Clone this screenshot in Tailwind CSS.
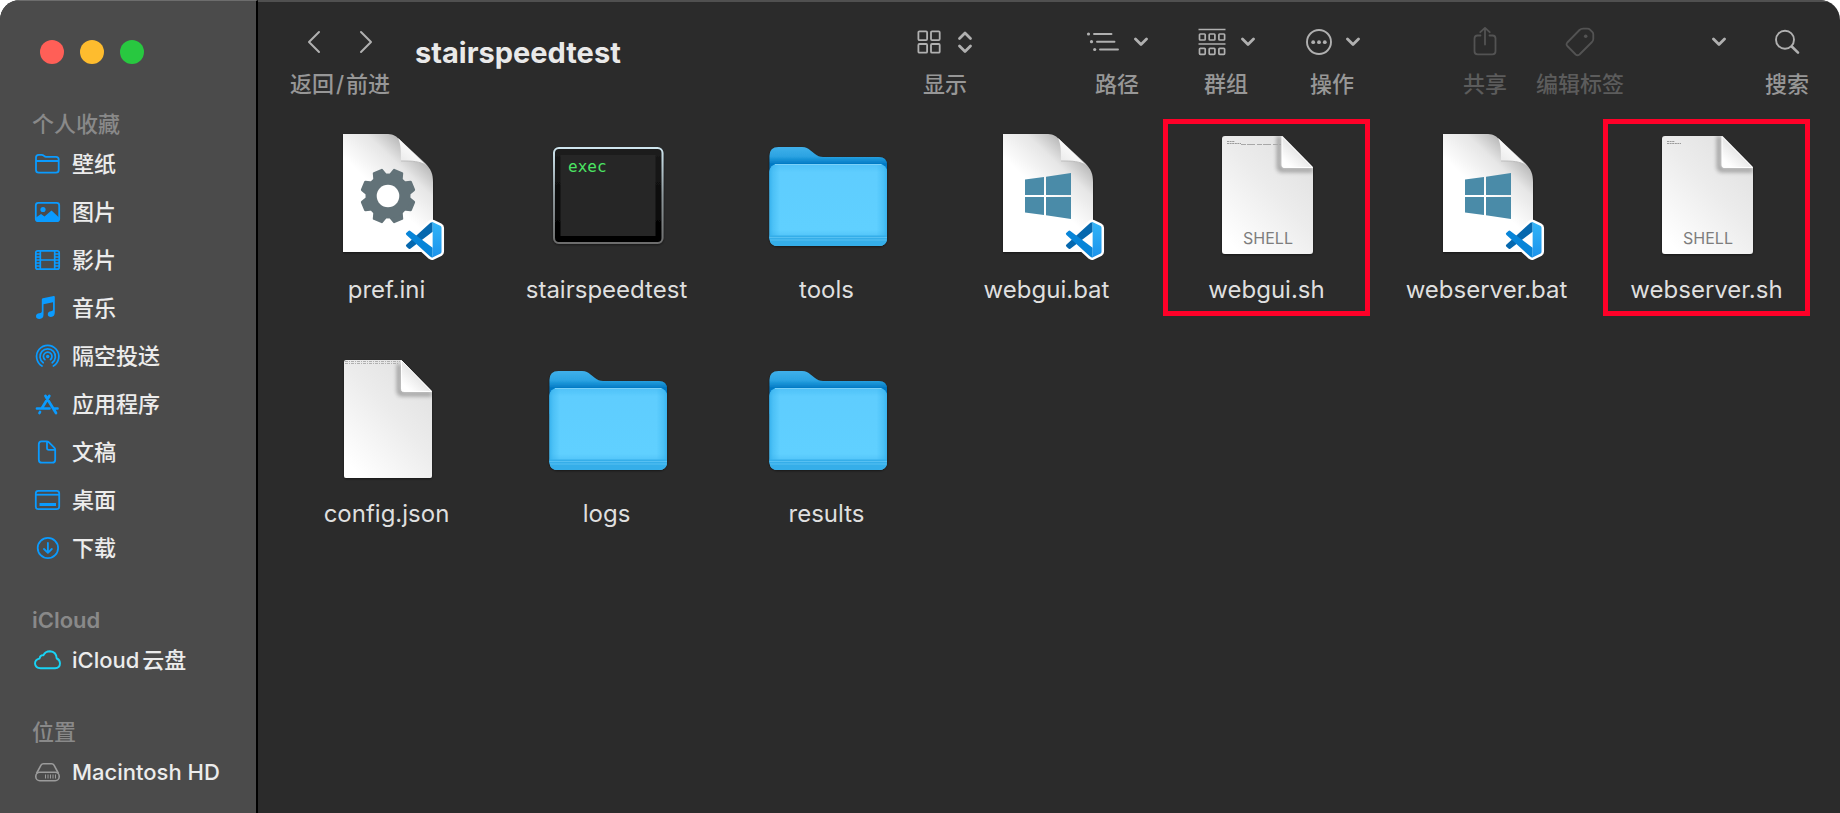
<!DOCTYPE html>
<html lang="zh-CN">
<head>
<meta charset="utf-8">
<title>stairspeedtest</title>
<script src="https://cdn.jsdelivr.net/npm/@tailwindcss/browser@4"></script>
</head>
<body class="bg-white font-['Inter','Noto_Sans_CJK_SC',sans-serif]">

<!-- Shared drawings -->
<svg class="absolute size-0" aria-hidden="true">
  <defs>
    <linearGradient id="paper" x1="1" y1="0" x2="0.2" y2="1"><stop offset="0" stop-color="#dedede"/><stop offset="0.5" stop-color="#ececec"/><stop offset="1" stop-color="#ffffff"/></linearGradient>
    <linearGradient id="flap" x1="0.9" y1="0.1" x2="0.2" y2="0.9"><stop offset="0.4" stop-color="#e2e2e2"/><stop offset="1" stop-color="#ffffff"/></linearGradient>
    <linearGradient id="curl" x1="0.75" y1="0.1" x2="0.45" y2="0.52"><stop offset="0" stop-color="#b4b4b4"/><stop offset="0.4" stop-color="#e6e6e6"/><stop offset="1" stop-color="#ffffff"/></linearGradient>
    <linearGradient id="curlflap" x1="0.7" y1="0.2" x2="0.1" y2="0.9"><stop offset="0.1" stop-color="#ffffff"/><stop offset="1" stop-color="#e9e9e9"/></linearGradient>
    <linearGradient id="folderback" x1="0" y1="17" x2="0" y2="34" gradientUnits="userSpaceOnUse"><stop offset="0" stop-color="#40b0ea"/><stop offset="0.55" stop-color="#2ba3e2"/><stop offset="1" stop-color="#0079c4"/></linearGradient>
    <linearGradient id="folderside" x1="0" y1="0" x2="1" y2="0"><stop offset="0" stop-color="#2fadeb" stop-opacity="0.8"/><stop offset="0.03" stop-color="#2fadeb" stop-opacity="0.4"/><stop offset="0.09" stop-color="#2fadeb" stop-opacity="0"/><stop offset="0.91" stop-color="#2fadeb" stop-opacity="0"/><stop offset="0.97" stop-color="#2fadeb" stop-opacity="0.4"/><stop offset="1" stop-color="#2fadeb" stop-opacity="0.8"/></linearGradient>
    <linearGradient id="folderface" x1="0" y1="0" x2="0" y2="1"><stop offset="0" stop-color="#4fc1f7"/><stop offset="0.1" stop-color="#5ecdfe"/><stop offset="0.8" stop-color="#60d0ff"/><stop offset="0.87" stop-color="#55c6fa"/></linearGradient>
    <linearGradient id="termedge" x1="0" y1="0" x2="0" y2="1"><stop offset="0" stop-color="#cfe6ef"/><stop offset="0.5" stop-color="#8d979b"/><stop offset="1" stop-color="#6d6d6d"/></linearGradient>
    <linearGradient id="termbody" x1="0" y1="0" x2="0" y2="1"><stop offset="0" stop-color="#1c1c1c"/><stop offset="1" stop-color="#000000"/></linearGradient>
    <linearGradient id="codepanel" x1="0" y1="0" x2="0" y2="1"><stop offset="0" stop-color="#32b5f8"/><stop offset="1" stop-color="#1c93ec"/></linearGradient>
    <filter id="blur" x="-30%" y="-30%" width="160%" height="160%"><feGaussianBlur stdDeviation="2"/></filter>
    <filter id="drop" x="-10%" y="-10%" width="120%" height="125%"><feDropShadow dx="0" dy="1" stdDeviation="1" flood-color="#000" flood-opacity="0.5"/></filter>
    <clipPath id="paperclip"><path d="M23 6H80.500L111 37V121a3 3 0 0 1-3 3H23a3 3 0 0 1-3-3V9a3 3 0 0 1 3-3z"/></clipPath>
  </defs>

  <symbol id="code-page" viewBox="0 0 129 132">
    <g filter="url(#drop)">
      <path d="M21 4H64C70 4 73 5 77 9L103 33C109 39 111 44 111 52V122H21z" fill="url(#curl)"/>
    </g>
    <path d="M76 8C79 14 79 22 79 31C90 31 98 31 105 36z" fill="url(#curlflap)"/>
    <path d="M79 31C90 31 98 31 105 36" fill="none" stroke="#bdbdbd" stroke-width="1"/>
  </symbol>

  <symbol id="code-badge" viewBox="0 0 129 132">
    <g transform="translate(84 92) scale(1.480)">
      <path d="M18.200.2L23.150 2.587A1.500 1.500 0 0 1 24 3.939V20.060A1.500 1.500 0 0 1 23.150 21.400L18.200 23.790A1.500 1.500 0 0 1 16.500 23.500L7 14.900 2.900 18 1.600 17.900.3 16.700V15.300L3.900 12 .3 8.700V7.300L1.600 6.100 2.900 6 7 9.100 16.500.5A1.500 1.500 0 0 1 18.200.2z" fill="#fff" stroke="#fff" stroke-width="3.400" stroke-linejoin="round"/>
      <path d="M18 .1L16.500.5.326 15.260a1 1 0 0 0 .001 1.479L1.650 17.940a.999.999 0 0 0 1.276.057L18 6.550z" fill="#0668ae"/>
      <path d="M18 23.900L16.500 23.500.326 8.740a1 1 0 0 1 .001-1.479L1.650 6.060a.999.999 0 0 1 1.276-.057L18 17.450z" fill="#0885d8"/>
      <path d="M16.500.5A1.490 1.490 0 0 1 18.210.21L23.150 2.587A1.500 1.500 0 0 1 24 3.939V20.060a1.500 1.500 0 0 1-.85 1.352L18.210 23.790A1.490 1.490 0 0 1 16.500 23.500C17.200 24 18 23.500 18 22.700V1.300C18 .5 17.200 0 16.500.5z" fill="url(#codepanel)"/>
    </g>
  </symbol>

  <symbol id="file-ini" viewBox="0 0 129 132">
    <use href="#code-page"/>
    <g transform="translate(66 66)" fill="#627278">
      <path id="tooth" d="M-7.500-20L-5.500-26.500Q-5.200-27.500-4.200-27.500H4.200Q5.200-27.500 5.500-26.500L7.500-20z" transform="rotate(22.500)"/>
      <use href="#tooth" transform="rotate(45)"/><use href="#tooth" transform="rotate(90)"/><use href="#tooth" transform="rotate(135)"/><use href="#tooth" transform="rotate(180)"/><use href="#tooth" transform="rotate(225)"/><use href="#tooth" transform="rotate(270)"/><use href="#tooth" transform="rotate(315)"/>
      <circle r="22.500"/><circle r="11.300" fill="#fff"/>
    </g>
    <use href="#code-badge"/>
  </symbol>

  <symbol id="file-bat" viewBox="0 0 129 132">
    <use href="#code-page"/>
    <path d="M43 49.500L62 47V65H43zM64 46.700L89 43V65H64zM43 67H62V85L43 82.500zM64 67H89V89L64 85.300z" fill="#4a8ba8"/>
    <use href="#code-badge"/>
  </symbol>

  <symbol id="file-sh" viewBox="0 0 129 132">
    <g filter="url(#drop)"><path d="M23 6H80.500L111 37V121a3 3 0 0 1-3 3H23a3 3 0 0 1-3-3V9a3 3 0 0 1 3-3z" fill="url(#paper)"/></g>
    <g clip-path="url(#paperclip)"><path d="M79 6V38H111V42H80Q75 42 75 37V6z" fill="#000" opacity="0.350" filter="url(#blur)"/></g>
    <path d="M80 6.500V35.500Q80 37.500 82 37.500H110.500z" fill="url(#flap)" stroke="#fff" stroke-width="1"/>
    <path d="M25 11.500H33M25 13.500H39" stroke="#9a9a9a" stroke-width="1" stroke-dasharray="2 .6" fill="none"/>
  </symbol>

  <symbol id="file-json" viewBox="0 0 129 132">
    <g filter="url(#drop)"><path d="M24 6H79L110 37V122a2 2 0 0 1-2 2H24a2 2 0 0 1-2-2V8a2 2 0 0 1 2-2z" fill="url(#paper)"/></g>
    <g clip-path="url(#paperclip)"><path d="M79 10V38H110V42H80Q75 42 75 37V10z" fill="#000" opacity="0.350" filter="url(#blur)"/></g>
    <path d="M79.500 6.500V35.500Q79.500 37.500 81.500 37.500H109.500z" fill="url(#flap)" stroke="#fff" stroke-width="1"/>
    <path d="M23 7.500H78M23 9.500H76" stroke="#b0b0b0" stroke-width="1" stroke-dasharray="3 1 1 1"/>
  </symbol>

  <symbol id="folder" viewBox="0 0 129 132">
    <g filter="url(#drop)">
      <path d="M7.500 26Q7.500 17 16.500 17H40C44 17 46 18.500 48.500 20.500L53 24C55.500 26 57.500 27 61 27H117Q125 27 125 35V60H7.500z" fill="url(#folderback)"/>
      <rect x="7.500" y="34" width="117.500" height="82" rx="8" fill="url(#folderface)"/>
    </g>
    <rect x="7.500" y="34" width="117.500" height="82" rx="8" fill="url(#folderside)"/>
    <path d="M7.500 105.500H125V108Q125 116 117 116H15.500Q7.500 116 7.500 108z" fill="#35aee9"/>
    <path d="M7.500 107.500H125M8 110H124.500" stroke="#56c0f2" stroke-width="1"/>
    <path d="M13 34.500H119.500" stroke="#7bd0f8" stroke-width="1"/>
  </symbol>

  <symbol id="terminal" viewBox="0 0 129 132">
    <rect x="12" y="18" width="108.500" height="95" rx="5" fill="url(#termbody)" stroke="url(#termedge)" stroke-width="2" filter="url(#drop)"/>
    <rect x="18.500" y="25" width="95" height="81" fill="#262626"/>
  </symbol>

  <symbol id="chevron" viewBox="0 0 14 10"><path d="M1.500 2L7 7.500 12.500 2" fill="none" stroke="currentColor" stroke-width="2.800" stroke-linecap="round" stroke-linejoin="round"/></symbol>
</svg>

<div class="flex min-h-screen rounded-t-[20px] overflow-hidden bg-[#2b2b2b] text-[22px]">

  <aside class="w-[258px] shrink-0 bg-[#4b4b4b] border-r-2 border-black border-t border-t-[#6d6d6d] pt-[39px] text-[#ececec]">
    <div class="flex gap-4 pl-10">
      <button aria-label="关闭" class="size-6 rounded-full bg-[#ff5f57]"></button>
      <button aria-label="最小化" class="size-6 rounded-full bg-[#febc2e]"></button>
      <button aria-label="缩放" class="size-6 rounded-full bg-[#28c840]"></button>
    </div>
    <nav class="mt-11 flex flex-col gap-8 font-medium text-[#0a9bff]">
      <section>
        <h2 class="h-8 leading-8 pl-8 text-[#898989]">个人收藏</h2>
        <ul>
          <li><a href="#" class="flex h-12 items-center gap-2 pl-8"><svg class="size-8" viewBox="0 0 32 32" fill="none" stroke="currentColor" stroke-width="1.800"><path d="M4 9.500Q4 6.800 6.700 6.800H9.500Q11 6.800 12 7.800Q13 8.800 14.500 8.800H24Q26.700 8.800 26.700 11.500V22Q26.700 24.700 24 24.700H6.700Q4 24.700 4 22zM4 13H26.700"/></svg><span class="text-[#ececec]">壁纸</span></a></li>
          <li><a href="#" class="flex h-12 items-center gap-2 pl-8"><svg class="size-8" viewBox="0 0 32 32"><rect x="3.800" y="6.800" width="23.400" height="18.400" rx="2.500" fill="none" stroke="currentColor" stroke-width="1.800"/><circle cx="11" cy="13.500" r="2.600" fill="currentColor"/><path d="M4 21.500L9 18 12.500 20.500 19.500 14.500 27 21.500V25H4z" fill="currentColor"/></svg><span class="text-[#ececec]">图片</span></a></li>
          <li><a href="#" class="flex h-12 items-center gap-2 pl-8"><svg class="size-8" viewBox="0 0 32 32" fill="none" stroke="currentColor" stroke-width="1.700"><rect x="3.800" y="6.800" width="23.400" height="18.400" rx="2"/><path d="M8.300 7V25M22.700 7V25M8.300 16H22.700M4 10H8M4 13H8M4 16H8M4 19H8M4 22H8M23 10H27M23 13H27M23 16H27M23 19H27M23 22H27"/></svg><span class="text-[#ececec]">影片</span></a></li>
          <li><a href="#" class="flex h-12 items-center gap-2 pl-8"><svg class="size-8" viewBox="0 0 32 32" fill="currentColor"><path d="M9.800 7.500Q9.800 6.500 10.800 6.300L21.800 4.100Q22.800 4 22.800 5V20.500Q22.800 24.500 19 25Q15.800 25 15.800 22.300Q15.800 19.600 19 19.300Q21 19.200 21 17.800V10.300L11.500 12.300V22.800Q11.500 26.500 7.500 27Q4 27 4 24.300Q4 21.700 7.300 21.300Q9.800 21.200 9.800 19.500z"/></svg><span class="text-[#ececec]">音乐</span></a></li>
          <li><a href="#" class="flex h-12 items-center gap-2 pl-8"><svg class="size-8" viewBox="0 0 32 32" fill="none" stroke="currentColor" stroke-width="1.700" stroke-linecap="round"><circle cx="15.700" cy="16.500" r="1.700" fill="currentColor" stroke="none"/><path d="M12.900 19.700A4.300 4.300 0 1 1 18.500 19.700M11.200 22.800A7.700 7.700 0 1 1 20.200 22.800M10 26A11.100 11.100 0 1 1 21.400 26"/></svg><span class="text-[#ececec]">隔空投送</span></a></li>
          <li><a href="#" class="flex h-12 items-center gap-2 pl-8"><svg class="size-8" viewBox="0 0 32 32" fill="none" stroke="currentColor" stroke-width="2.700" stroke-linecap="round"><path d="M5 20.500H17.500M22.500 20.500H25.500M17.300 8L10 20M13.500 8L24 25M8 24L7.500 25"/></svg><span class="text-[#ececec]">应用程序</span></a></li>
          <li><a href="#" class="flex h-12 items-center gap-2 pl-8"><svg class="size-8" viewBox="0 0 32 32" fill="none" stroke="currentColor" stroke-width="1.800" stroke-linejoin="round"><path d="M9.500 5.300H14.500Q16 5.300 17 6.300L22.200 11.700Q23.200 12.700 23.200 14V23.700Q23.200 26.700 20.200 26.700H9.800Q6.800 26.700 6.800 23.700V8.300Q6.800 5.300 9.500 5.300zM15 5.500V12Q15 13.800 16.800 13.800H23"/></svg><span class="text-[#ececec]">文稿</span></a></li>
          <li><a href="#" class="flex h-12 items-center gap-2 pl-8"><svg class="size-8" viewBox="0 0 32 32" fill="none" stroke="currentColor" stroke-width="1.800"><rect x="3.800" y="6.800" width="23.400" height="18.400" rx="2.500"/><path d="M4 10.700H27"/><path d="M7.500 20.500H24" stroke-width="3"/></svg><span class="text-[#ececec]">桌面</span></a></li>
          <li><a href="#" class="flex h-12 items-center gap-2 pl-8"><svg class="size-8" viewBox="0 0 32 32" fill="none" stroke="currentColor" stroke-width="1.800" stroke-linecap="round" stroke-linejoin="round"><circle cx="15.900" cy="16" r="10.200"/><path d="M15.900 11V20.500M12 17L15.900 20.800 19.800 17"/></svg><span class="text-[#ececec]">下载</span></a></li>
        </ul>
      </section>
      <section>
        <h2 class="h-8 leading-8 pl-8 text-[#898989] font-semibold">iCloud</h2>
        <ul>
          <li><a href="#" class="flex h-12 items-center gap-2 pl-8"><svg class="size-8 text-[#19d3f5]" viewBox="0 0 32 32" fill="none" stroke="currentColor" stroke-width="1.900" stroke-linejoin="round"><path d="M8.500 24.200H23Q28 24 28 19.300Q27.800 15.500 24.700 14.500Q24.300 7.500 18 7.200Q13.200 7.200 11.500 11.200Q8.200 10.800 7.500 14.600Q3 15.500 3 19.700Q3.500 24.200 8.500 24.200z"/></svg><span class="text-[#ececec]">iCloud<span class="ml-[3px]">云盘</span></span></a></li>
        </ul>
      </section>
      <section>
        <h2 class="h-8 leading-8 pl-8 text-[#898989]">位置</h2>
        <ul>
          <li><a href="#" class="flex h-12 items-center gap-2 pl-8"><svg class="size-8 text-[#9b9b9b]" viewBox="0 0 32 32" fill="none" stroke="currentColor" stroke-width="1.600"><path d="M4.500 17.500L9 9.200Q9.800 7.800 11.300 7.800H19.700Q21.200 7.800 22 9.200L26.500 17.500"/><rect x="3.800" y="16.300" width="23.400" height="8.400" rx="4"/><path d="M13.500 18.500V22.500M16 18.500V22.500M18.500 18.500V22.500M21 18.500V22.500M23.500 18.500V22.500" stroke-width="1"/></svg><span class="text-[#ececec]">Macintosh HD</span></a></li>
        </ul>
      </section>
    </nav>
  </aside>

  <main class="min-w-0 flex-1 border-t-2 border-t-[#505050]">
    <header class="flex pt-[25px] pl-[31px] pr-[31px] h-[117px] leading-7 font-medium text-[#979797]">
      <div class="flex w-[102px] flex-col items-center gap-[13px]">
        <div class="flex h-[30px] items-center gap-9 text-[#b0b0b0]">
          <button aria-label="返回"><svg class="w-4 h-6" viewBox="0 0 16 24" fill="none" stroke="currentColor" stroke-width="2" stroke-linecap="round" stroke-linejoin="round"><path d="M13 2L3 12 13 22"/></svg></button>
          <button aria-label="前进"><svg class="w-4 h-6" viewBox="0 0 16 24" fill="none" stroke="currentColor" stroke-width="2" stroke-linecap="round" stroke-linejoin="round"><path d="M3 2L13 12 3 22"/></svg></button>
        </div>
        <span class="flex gap-[2px]"><span>返回</span><span>/</span><span>前进</span></span>
      </div>
      <h1 class="ml-6 mr-auto mt-2 leading-9 text-[29px] font-bold text-[#e9e9e9]">stairspeedtest</h1>

      <button class="flex w-[56px] flex-col items-center gap-[13px] mr-[113px]">
        <span class="flex h-[30px] items-center gap-4 text-[#b0b0b0]"><svg class="w-6 h-6" viewBox="0 0 24 24" fill="none" stroke="currentColor" stroke-width="1.800"><rect x="1.400" y="1.400" width="8.700" height="8.700" rx="1"/><rect x="14" y="1.400" width="8.700" height="8.700" rx="1"/><rect x="1.400" y="14" width="8.700" height="8.700" rx="1"/><rect x="14" y="14" width="8.700" height="8.700" rx="1"/></svg><svg class="w-4 h-6" viewBox="0 0 16 24" fill="none" stroke="currentColor" stroke-width="2.800" stroke-linecap="round" stroke-linejoin="round"><path d="M2.500 8.500L8 3 13.500 8.500M2.500 16L8 21.500 13.500 16"/></svg></span>
        <span>显示</span>
      </button>
      <button class="flex w-[62px] flex-col items-center gap-[13px] mr-[49px]">
        <span class="flex h-[30px] items-center gap-[14px] text-[#b0b0b0]"><svg class="w-[34px] h-6" viewBox="0 0 34 24" fill="none" stroke="currentColor" stroke-width="1.900" stroke-linecap="round"><path d="M8 4H25.500M11 11.700H28.500M14 19.500H32"/><g fill="currentColor" stroke="none"><circle cx="2.500" cy="4" r="1.600"/><circle cx="5.500" cy="11.700" r="1.600"/><circle cx="8.700" cy="19.500" r="1.600"/></g></svg><svg class="w-[14px] h-[10px]"><use href="#chevron"/></svg></span>
        <span>路径</span>
      </button>
      <button class="flex w-[58px] flex-col items-center gap-[13px] mr-[49px]">
        <span class="flex h-[30px] items-center gap-[15px] text-[#b0b0b0]"><svg class="w-7 h-7" viewBox="0 0 28 28" fill="none" stroke="currentColor" stroke-width="1.600"><path d="M.5 1.500H27.500M.5 16H27.500"/><g stroke-width="1.700"><rect x="1.500" y="6" width="5.700" height="6" rx=".8"/><rect x="11.200" y="6" width="5.700" height="6" rx=".8"/><rect x="20.900" y="6" width="5.700" height="6" rx=".8"/><rect x="1.500" y="20.300" width="5.700" height="6" rx=".8"/><rect x="11.200" y="20.300" width="5.700" height="6" rx=".8"/><rect x="20.900" y="20.300" width="5.700" height="6" rx=".8"/></g></svg><svg class="w-[14px] h-[10px]"><use href="#chevron"/></svg></span>
        <span>群组</span>
      </button>
      <button class="flex w-[56px] flex-col items-center gap-[13px] mr-[103px]">
        <span class="flex h-[30px] items-center gap-[13px] text-[#b0b0b0]"><svg class="w-7 h-7" viewBox="0 0 28 28" fill="none" stroke="currentColor" stroke-width="1.900"><circle cx="14" cy="14" r="12"/><g fill="currentColor" stroke="none"><circle cx="8.200" cy="14.200" r="1.900"/><circle cx="14" cy="14.200" r="1.900"/><circle cx="19.800" cy="14.200" r="1.900"/></g></svg><svg class="w-[14px] h-[10px]"><use href="#chevron"/></svg></span>
        <span>操作</span>
      </button>
      <button disabled class="flex w-11 flex-col items-center gap-[13px] mr-[29px] text-[#5c5c5c]">
        <span class="flex h-[30px] items-center"><svg class="w-6 h-[30px]" viewBox="0 0 24 30" fill="none" stroke="#535353" stroke-width="1.800" stroke-linecap="round" stroke-linejoin="round"><path d="M7.500 8.500H4.500Q1.500 8.500 1.500 11.500V24.300Q1.500 27.300 4.500 27.300H19.500Q22.500 27.300 22.500 24.300V11.500Q22.500 8.500 19.500 8.500H16.500M12 17.500V1M7.300 5.200L12 .9 16.700 5.200"/></svg></span>
        <span>共享</span>
      </button>
      <button disabled class="flex w-[88px] flex-col items-center gap-[13px] mr-[88px] text-[#5c5c5c]">
        <span class="flex h-[30px] items-center"><svg class="w-[30px] h-[30px]" viewBox="0 0 30 30" fill="none" stroke="#535353" stroke-width="1.800" stroke-linejoin="round"><path d="M14.500 3Q16 1.600 18 1.600H22.500Q24 1.600 25 2.600L27.500 5.200Q28.300 6 28.300 7.500V12Q28.300 13.500 27 15L14.500 27.500Q12.500 29 10.700 27.500L2.300 19Q.8 17.300 2.300 15.500z"/><circle cx="20.700" cy="9.200" r="1.800" fill="#535353" stroke="none"/></svg></span>
        <span>编辑标签</span>
      </button>
      <button aria-label="更多" class="flex h-[30px] items-center mr-[39px] text-[#b0b0b0]"><svg class="w-[14px] h-[10px]"><use href="#chevron"/></svg></button>
      <button class="flex w-11 flex-col items-center gap-[13px]">
        <span class="flex h-[30px] items-center text-[#b0b0b0]"><svg class="w-[26px] h-[26px]" viewBox="0 0 26 26" fill="none" stroke="currentColor" stroke-linecap="round"><circle cx="11" cy="10.700" r="9" stroke-width="1.900"/><path d="M17.800 17.500L24 23.700" stroke-width="2.600"/></svg></span>
        <span>搜索</span>
      </button>
    </header>

    <ul class="grid grid-cols-[repeat(auto-fill,207px)] gap-x-[13px] gap-y-[27px] pl-[25px] pr-6 text-[24px] leading-8 text-[#dfdfdf]">
      <li><button class="flex h-[197px] w-full flex-col items-center gap-3 border-5 border-transparent pt-[6px]"><svg class="w-[129px] h-[132px]"><use href="#file-ini"/></svg><span>pref.ini</span></button></li>
      <li><button class="flex h-[197px] w-full flex-col items-center gap-3 border-5 border-transparent pt-[6px]"><svg class="w-[129px] h-[132px]"><use href="#terminal"/><text x="26" y="42" class="font-['DejaVu_Sans_Mono',monospace] text-[16px]" fill="#4be463">exec</text></svg><span>stairspeedtest</span></button></li>
      <li><button class="flex h-[197px] w-full flex-col items-center gap-3 border-5 border-transparent pt-[6px]"><svg class="w-[129px] h-[132px]"><use href="#folder"/></svg><span>tools</span></button></li>
      <li><button class="flex h-[197px] w-full flex-col items-center gap-3 border-5 border-transparent pt-[6px]"><svg class="w-[129px] h-[132px]"><use href="#file-bat"/></svg><span>webgui.bat</span></button></li>
      <li><button class="flex h-[197px] w-full flex-col items-center gap-3 border-5 border-[#ff0028] pt-[6px]"><svg class="w-[129px] h-[132px]"><use href="#file-sh"/><path d="M39 14.500H79" stroke="#a8a8a8" stroke-width="1" stroke-dasharray="5 1 8 2"/><text x="66" y="114" text-anchor="middle" class="text-[16px]" fill="#7d7d7d">SHELL</text></svg><span>webgui.sh</span></button></li>
      <li><button class="flex h-[197px] w-full flex-col items-center gap-3 border-5 border-transparent pt-[6px]"><svg class="w-[129px] h-[132px]"><use href="#file-bat"/></svg><span>webserver.bat</span></button></li>
      <li><button class="flex h-[197px] w-full flex-col items-center gap-3 border-5 border-[#ff0028] pt-[6px]"><svg class="w-[129px] h-[132px]"><use href="#file-sh"/><text x="66" y="114" text-anchor="middle" class="text-[16px]" fill="#7d7d7d">SHELL</text></svg><span>webserver.sh</span></button></li>
      <li><button class="flex h-[197px] w-full flex-col items-center gap-3 border-5 border-transparent pt-[6px]"><svg class="w-[129px] h-[132px]"><use href="#file-json"/></svg><span>config.json</span></button></li>
      <li><button class="flex h-[197px] w-full flex-col items-center gap-3 border-5 border-transparent pt-[6px]"><svg class="w-[129px] h-[132px]"><use href="#folder"/></svg><span>logs</span></button></li>
      <li><button class="flex h-[197px] w-full flex-col items-center gap-3 border-5 border-transparent pt-[6px]"><svg class="w-[129px] h-[132px]"><use href="#folder"/></svg><span>results</span></button></li>
    </ul>
  </main>
</div>
</body>
</html>
